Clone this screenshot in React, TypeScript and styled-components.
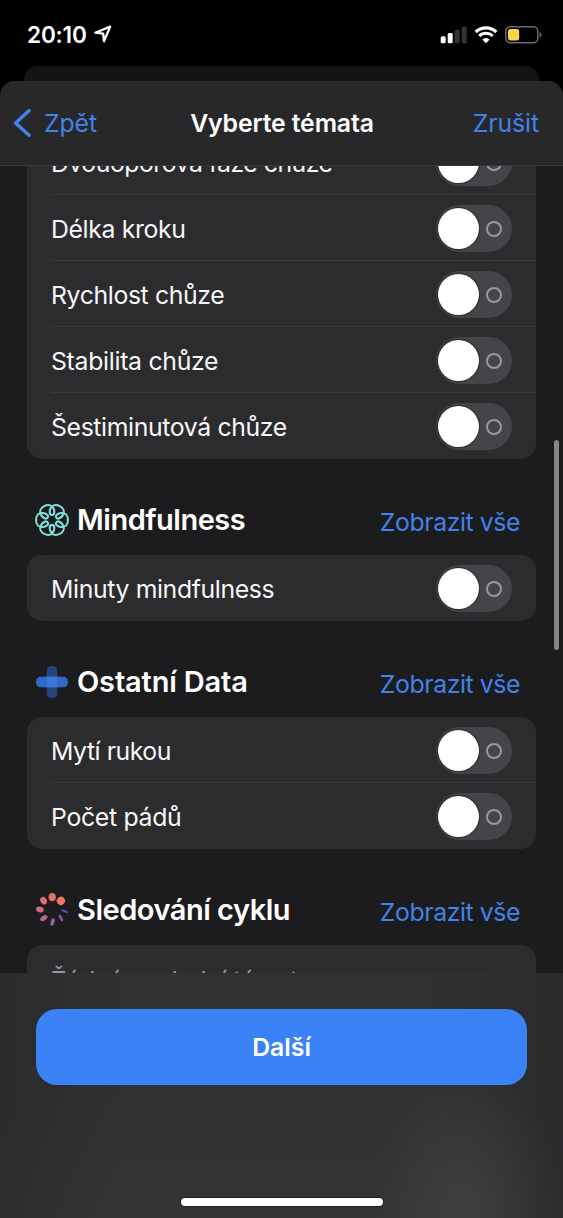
import React from "react";
import styled, { createGlobalStyle } from "styled-components";

const GlobalStyle = createGlobalStyle`
  * { box-sizing: border-box; }
  html, body { margin: 0; background: #000; }
  button { font: inherit; letter-spacing: inherit; border: 0; padding: 0; background: none; color: inherit; }
`;

const BLUE = "#4083ea";

const Screen = styled.div`
  width: 563px;
  height: 1218px;
  overflow: hidden;
  display: flex;
  flex-direction: column;
  background: #000;
  color: #fff;
  font-family: Inter, "Liberation Sans", sans-serif;
  font-size: 24.8px;
`;

const StatusBar = styled.div`
  height: 66px;
  flex: none;
  display: flex;
  align-items: flex-start;
  justify-content: space-between;
  padding: 20px 21px 0 27px;
`;

const Clock = styled.div`
  display: flex;
  align-items: center;
  gap: 6px;
  height: 28px;
  font-size: 22.6px;
  font-weight: 600;
  letter-spacing: -0.2px;
`;

const Indicators = styled.div`
  display: flex;
  align-items: center;
  gap: 7px;
  height: 29px;
`;

const BackSheet = styled.div`
  flex: none;
  height: 15px;
  margin: 0 24px;
  border-radius: 14px 14px 0 0;
  background: #141416;
`;

const Sheet = styled.div`
  flex: 1;
  min-height: 0;
  display: flex;
  flex-direction: column;
  background: #1c1c1e;
  border-radius: 15px 15px 0 0;
  overflow: hidden;
`;

const NavBar = styled.header`
  flex: none;
  height: 85px;
  display: grid;
  grid-template-columns: 1fr auto 1fr;
  align-items: center;
  padding: 0 24px 0 13px;
  background: #28282a;
  border-bottom: 1px solid #38383a;
`;

const BackButton = styled.button`
  display: flex;
  align-items: center;
  gap: 13px;
  color: ${BLUE};
`;

const Title = styled.h1`
  margin: 0 -6px 0 6px;
  font-size: 24.8px;
  font-weight: 600;
  letter-spacing: -0.12px;
`;

const CancelButton = styled.button`
  justify-self: end;
  color: ${BLUE};
`;

const Body = styled.main`
  position: relative;
  flex: none;
  height: 807px;
  overflow: hidden;
  padding: 0 27px;
`;

const Content = styled.div`
  margin-top: -37px;
`;

const ScrollThumb = styled.div`
  position: absolute;
  right: 4px;
  top: 274px;
  width: 5px;
  height: 210px;
  border-radius: 3px;
  background: #858587;
`;

const Card = styled.div`
  border-radius: 15px;
  background: #2c2c2e;
  overflow: hidden;
  padding-left: 24px;
`;

const Row = styled.div<{ $muted?: boolean }>`
  height: 66px;
  display: flex;
  align-items: center;
  justify-content: space-between;
  padding: ${(p) => (p.$muted ? 3 : 0)}px 24px 0 0;
  color: ${(p) => (p.$muted ? "#98989f" : "#f7f7f8")};
  &:not(:last-child) { border-bottom: 1px solid #38383a; padding-top: 1px; }
`;

const Label = styled.span<{ $spacing: number }>`
  white-space: nowrap;
  letter-spacing: ${(p) => p.$spacing}px;
`;

const RowLabel = styled(Label)`
  padding-top: 2px;
`;

const Track = styled.span`
  width: 76px;
  height: 47px;
  border-radius: 24px;
  background: #454549;
  display: flex;
  align-items: center;
  justify-content: space-between;
  padding: 0 10.5px 0 2px;
`;

const Knob = styled.span`
  width: 41px;
  height: 41px;
  border-radius: 50%;
  background: #fff;
  box-shadow: 0 0 1px 1px #29292b;
`;

const Ring = styled.span`
  width: 16px;
  height: 16px;
  margin-top: 1px;
  border: 2px solid #99999c;
  border-radius: 50%;
`;

const SectionHeader = styled.div`
  height: 96px;
  display: flex;
  align-items: center;
  padding: 26px 16px 0 8px;
`;

const SectionTitle = styled.h2<{ $spacing: number }>`
  flex: 1;
  margin: 0 0 1px 8px;
  font-size: 29px;
  font-weight: 600;
  white-space: nowrap;
  letter-spacing: ${(p) => p.$spacing}px;
`;

const ShowAll = styled.button`
  margin-top: 3px;
  color: ${BLUE};
`;

const Footer = styled.footer`
  flex: 1;
  display: flex;
  flex-direction: column;
  align-items: center;
  justify-content: space-between;
  padding: 36px 36px 12px;
  background:
    radial-gradient(ellipse 90px 150px at 467px 235px, rgba(74, 74, 76, 0.55), transparent),
    linear-gradient(90deg, rgba(36, 37, 40, 0.5), transparent 22% 75%, rgba(36, 37, 40, 0.55)),
    linear-gradient(#313132, #303132 50%, #353536);
`;

const NextButton = styled.button`
  width: 491px;
  height: 76px;
  border-radius: 21px;
  background: #3b82f7;
  color: #fff;
  font-weight: 600;
`;

const HomeIndicator = styled.div`
  width: 202px;
  height: 8px;
  border-radius: 4px;
  background: #fff;
  box-shadow: 0 0 1px 1px #202022;
`;

function LocationIcon() {
  return (
    <svg width="20" height="20" viewBox="0 0 20 20" fill="none">
      <path d="M2.3 8.7 17.2 2.6 11 17.2 10.2 9.6Z" stroke="#fff" strokeWidth="2.3" strokeLinejoin="round" />
    </svg>
  );
}

function SignalIcon() {
  return (
    <svg width="27" height="18" viewBox="0 0 27 18">
      <rect x="0.7" y="10.3" width="5" height="7" rx="1.6" fill="#fff" />
      <rect x="7.7" y="7" width="5" height="10.3" rx="1.6" fill="#fff" />
      <rect x="14.7" y="3.7" width="5" height="13.6" rx="1.6" fill="#343436" />
      <rect x="21.7" y="0.4" width="5" height="16.9" rx="1.6" fill="#343436" />
    </svg>
  );
}

function WifiIcon() {
  return (
    <svg width="24" height="18" viewBox="0 0 24 18" fill="none" stroke="#fff" strokeWidth="3.1">
      <path d="M1.7 6a15 15 0 0 1 20.6 0" />
      <path d="M5.3 10a9.7 9.7 0 0 1 13.4 0" />
      <path d="M12 17.2 8.3 13.6a5.2 5.2 0 0 1 7.4 0Z" fill="#fff" stroke="none" />
    </svg>
  );
}

function BatteryIcon() {
  return (
    <svg width="37" height="18" viewBox="0 0 37 18">
      <rect x="0.8" y="0.8" width="32" height="16" rx="4.5" fill="none" stroke="#6c6c6e" strokeWidth="1.5" />
      <rect x="3" y="3" width="11.2" height="11.6" rx="2.5" fill="#f8d549" />
      <path d="M34.7 6v5.7c2.3-.8 2.3-4.9 0-5.7Z" fill="#6c6c6e" />
    </svg>
  );
}

function BackIcon() {
  return (
    <svg width="18" height="30" viewBox="0 0 18 30" fill="none">
      <path d="M16 2.8 2.6 15 16 27.2" stroke={BLUE} strokeWidth="3.5" strokeLinecap="round" strokeLinejoin="round" />
    </svg>
  );
}

const PETALS = [0, 60, 120, 180, 240, 300];

function MindfulnessIcon() {
  return (
    <svg width="34" height="34" viewBox="-17 -17 34 34" fill="none" stroke="#80dfd9" strokeWidth="2.1">
      {PETALS.map((angle) => (
        <path
          key={angle}
          transform={`rotate(${angle})`}
          d="M0-4.9C-2.8-4.9-3.4-10.2 0-13.4C2-15.5 5.4-15.4 7.9-13.68M0-4.9C2.8-4.9 3.4-10.2 0-13.4C-2-15.5-5.4-15.4-7.9-13.68"
        />
      ))}
    </svg>
  );
}

function OtherDataIcon() {
  return (
    <svg width="34" height="34" viewBox="0 0 34 34">
      <rect x="11.7" y="1" width="10.6" height="32" rx="4.5" fill="#25457c" />
      <rect x="1" y="11.7" width="32" height="10.6" rx="4.8" fill="#3269c5" />
      <rect x="11.7" y="11.7" width="10.6" height="10.6" fill="#3c77da" />
    </svg>
  );
}

const CYCLE_DOTS = [
  { cx: 8.9, cy: -9.1, rx: 4, ry: 4.2, turn: 45, color: "#f0765c" },
  { cx: 0.2, cy: -12.8, rx: 3.6, ry: 4.1, turn: 0, color: "#e07068" },
  { cx: -8.4, cy: -9.2, rx: 3.1, ry: 4, turn: -30, color: "#d76d79" },
  { cx: -12.1, cy: -0.5, rx: 2.8, ry: 4, turn: -75, color: "#cd6988" },
  { cx: -8.2, cy: 8.2, rx: 2.4, ry: 4, turn: 58, color: "#b96594" },
  { cx: 0.6, cy: 12, rx: 1.9, ry: 4, turn: 15, color: "#9a5da7" },
  { cx: 8.9, cy: 8, rx: 1.4, ry: 3.9, turn: -27, color: "#7e58b5" },
  { cx: 12.4, cy: 1, rx: 1, ry: 3.9, turn: -68, color: "#5a51b8" },
];

function CycleIcon() {
  return (
    <svg width="34" height="34" viewBox="-17 -17 34 34">
      {CYCLE_DOTS.map((dot) => (
        <ellipse
          key={dot.color}
          rx={dot.rx}
          ry={dot.ry}
          fill={dot.color}
          transform={`translate(${dot.cx} ${dot.cy}) rotate(${dot.turn})`}
        />
      ))}
    </svg>
  );
}

function Toggle() {
  return (
    <Track role="switch" aria-checked="false">
      <Knob />
      <Ring />
    </Track>
  );
}

function TopicRow({ label, spacing = -0.37 }: { label: string; spacing?: number }) {
  return (
    <Row>
      <RowLabel $spacing={spacing}>{label}</RowLabel>
      <Toggle />
    </Row>
  );
}

function SectionHead({ icon, title, spacing = -0.48 }: { icon: React.ReactNode; title: string; spacing?: number }) {
  return (
    <SectionHeader>
      {icon}
      <SectionTitle $spacing={spacing}>{title}</SectionTitle>
      <ShowAll><Label $spacing={-0.42}>Zobrazit vše</Label></ShowAll>
    </SectionHeader>
  );
}

export default function App() {
  return (
    <Screen>
      <GlobalStyle />
      <StatusBar>
        <Clock>20:10<LocationIcon /></Clock>
        <Indicators>
          <SignalIcon />
          <WifiIcon />
          <BatteryIcon />
        </Indicators>
      </StatusBar>
      <BackSheet />
      <Sheet>
        <NavBar>
          <BackButton><BackIcon /><Label $spacing={-0.1}>Zpět</Label></BackButton>
          <Title>Vyberte témata</Title>
          <CancelButton><Label $spacing={-0.1}>Zrušit</Label></CancelButton>
        </NavBar>
        <Body>
          <Content>
            <Card>
              <TopicRow label="Dvouoporová fáze chůze" spacing={-0.5} />
              <TopicRow label="Délka kroku" />
              <TopicRow label="Rychlost chůze" />
              <TopicRow label="Stabilita chůze" spacing={-0.3} />
              <TopicRow label="Šestiminutová chůze" />
            </Card>
            <SectionHead icon={<MindfulnessIcon />} title="Mindfulness" />
            <Card>
              <TopicRow label="Minuty mindfulness" />
            </Card>
            <SectionHead icon={<OtherDataIcon />} title="Ostatní Data" spacing={-0.17} />
            <Card>
              <TopicRow label="Mytí rukou" spacing={-0.45} />
              <TopicRow label="Počet pádů" spacing={-0.3} />
            </Card>
            <SectionHead icon={<CycleIcon />} title="Sledování cyklu" />
            <Card>
              <Row $muted><Label $spacing={-0.3}>Žádná poslední témata</Label></Row>
            </Card>
          </Content>
          <ScrollThumb />
        </Body>
        <Footer>
          <NextButton>Další</NextButton>
          <HomeIndicator />
        </Footer>
      </Sheet>
    </Screen>
  );
}
